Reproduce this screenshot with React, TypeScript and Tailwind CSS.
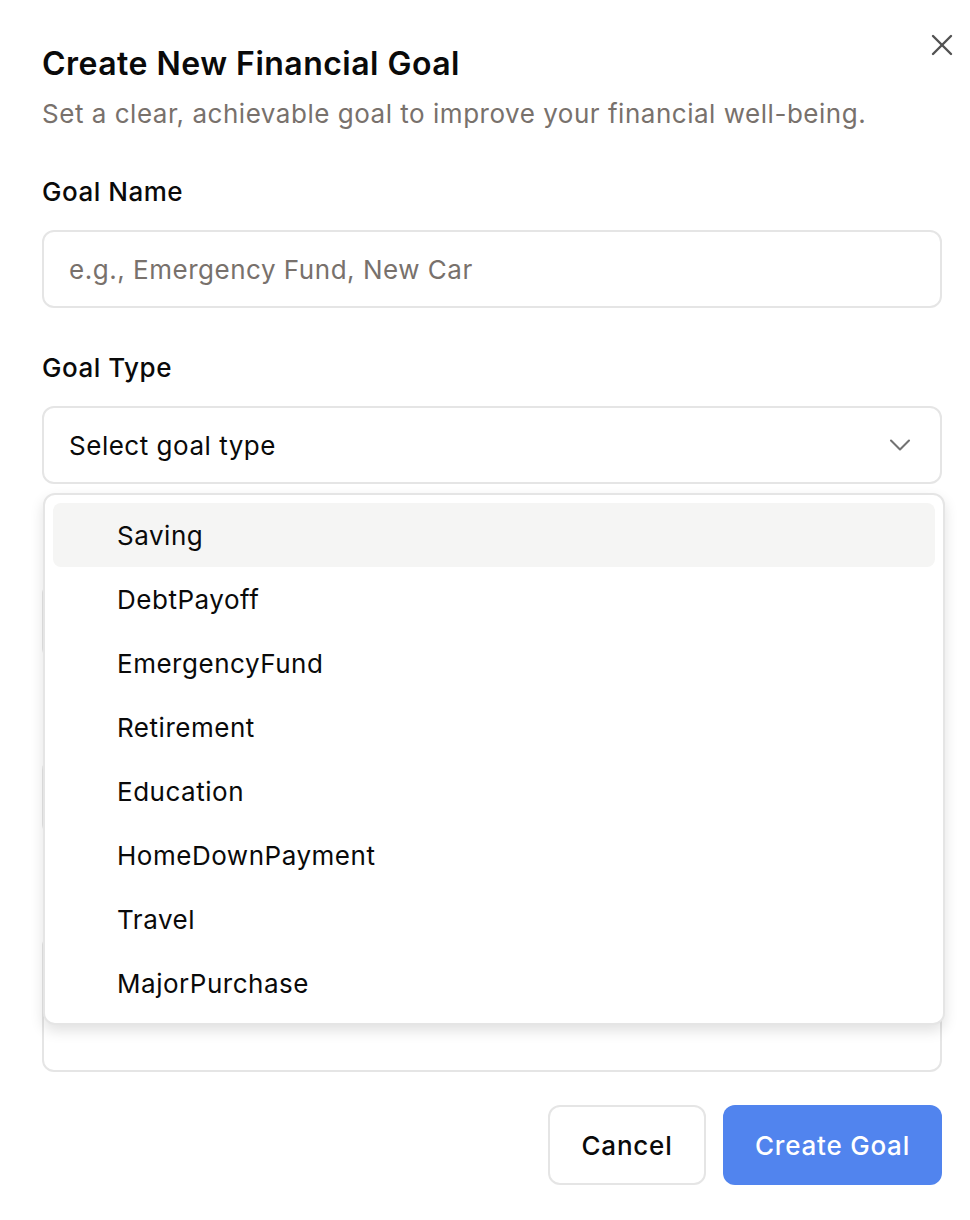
import { X, ChevronDown } from "lucide-react";

const goalTypes = [
  "Saving",
  "DebtPayoff",
  "EmergencyFund",
  "Retirement",
  "Education",
  "HomeDownPayment",
  "Travel",
  "MajorPurchase",
];

function Field({ label, children }: { label?: string; children: React.ReactNode }) {
  return (
    <div className="flex flex-col gap-[22px]">
      <label className="h-[32px] text-[26px] leading-[32px] font-medium tracking-[0.02em] text-[#0a0a0a]">{label}</label>
      {children}
    </div>
  );
}

export default function App() {
  return (
    <div
      className="relative w-[970px] h-[1220px] bg-white text-[#0a0a0a]"
      style={{ fontFamily: "Inter, 'Noto Sans', sans-serif" }}
    >
      <button className="absolute right-[10px] top-[27px] text-[#525252]">
        <X className="w-[36px] h-[36px]" strokeWidth={1.6} />
      </button>

      <div className="pl-[42px] pr-[28px] pt-[44px]">
        {/* header */}
        <h1 className="text-[32px] leading-[40px] font-semibold tracking-[0.015em]">Create New Financial Goal</h1>
        <p className="mt-[14px] text-[26px] leading-[32px] tracking-[0.02em] text-[#78716c]">
          Set a clear, achievable goal to improve your financial well-being.
        </p>

        {/* form */}
        <div className="mt-[46px] flex flex-col gap-[44px]">
          <Field label="Goal Name">
            <div className="h-[78px] rounded-[12px] border-2 border-[#e5e5e5] px-[25px] flex items-center text-[26px] tracking-[0.02em] text-[#78716c]">
              e.g., Emergency Fund, New Car
            </div>
          </Field>

          <Field label="Goal Type">
            <div className="h-[78px] rounded-[12px] border-2 border-[#e5e5e5] pl-[25px] pr-[22px] flex items-center justify-between text-[26px] tracking-[0.02em]">
              <span>Select goal type</span>
              <ChevronDown className="w-[36px] h-[36px] text-[#737373]" strokeWidth={1.4} />
            </div>
          </Field>

          {/* fields hidden under the open list */}
          <Field>
            <div className="h-[78px] rounded-[12px] border-2 border-[#e5e5e5]" />
          </Field>
          <Field>
            <div className="h-[78px] rounded-[12px] border-2 border-[#e5e5e5]" />
          </Field>
          <Field>
            <div className="h-[138px] rounded-[12px] border-2 border-[#e5e5e5]" />
          </Field>
        </div>

        {/* footer */}
        <div className="mt-[33px] flex justify-end gap-[17px]">
          <button className="h-[80px] w-[158px] rounded-[12px] border-2 border-[#e5e5e5] bg-white text-[26px] font-medium tracking-[0.03em] text-[#0a0a0a]">
            Cancel
          </button>
          <button className="h-[80px] w-[219px] rounded-[12px] bg-[#5184ee] text-[26px] font-medium tracking-[0.03em] text-white">
            Create Goal
          </button>
        </div>
      </div>

      {/* open select dropdown */}
      <div className="absolute left-[43px] top-[493px] w-[902px] rounded-[12px] border-2 border-[#e5e5e5] bg-white p-[8px] shadow-[0_6px_14px_rgba(0,0,0,0.12)]">
        {goalTypes.map((t, i) => (
          <div
            key={t}
            className={`h-[64px] rounded-[8px] pl-[64px] flex items-center text-[26px] tracking-[0.02em] ${i === 0 ? "bg-[#f5f5f4]" : ""}`}
          >
            {t}
          </div>
        ))}
      </div>
    </div>
  );
}
